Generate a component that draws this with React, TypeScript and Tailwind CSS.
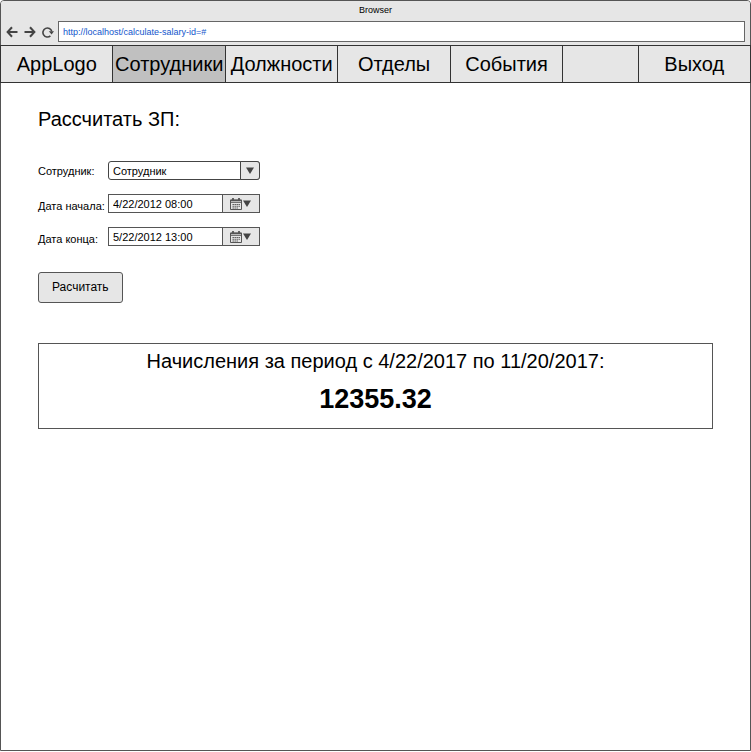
import { useState } from "react";

const menu = [
  { title: "AppLogo", active: false },
  { title: "Сотрудники", active: true },
  { title: "Должности", active: false },
  { title: "Отделы", active: false },
  { title: "События", active: false },
];

function ArrowIcon({ flipped = false }: { flipped?: boolean }) {
  return (
    <svg
      viewBox="0 0 12 12"
      className={flipped ? "size-3 rotate-180" : "size-3"}
      fill="none"
      stroke="#444"
      strokeWidth="2"
      aria-hidden="true"
    >
      <path d="M6 1.2 1.6 6 6 10.8M1.6 6H11.5" />
    </svg>
  );
}

function ReloadIcon() {
  return (
    <svg viewBox="0 0 12 12" className="size-3" fill="none" aria-hidden="true">
      <path d="M8.4 9.9A4.5 4.5 0 1 1 9.8 5.4" stroke="#444" strokeWidth="1.6" />
      <path d="M6.8 5.2H12L9.6 8.6Z" fill="#444" />
    </svg>
  );
}

function CaretIcon() {
  return (
    <svg viewBox="0 0 8 7" className="h-[7px] w-2" aria-hidden="true">
      <path d="M0 0.5H8L4 7Z" fill="#444" />
    </svg>
  );
}

function CalendarIcon() {
  return (
    <svg viewBox="0 0 12 12" className="size-3" fill="none" stroke="#555" aria-hidden="true">
      <path d="M0.5 2H11.5V11.5H0.5Z" />
      <path d="M0.5 2.5H11.5" strokeWidth="1.6" />
      <path d="M3 0V3M9 0V3" strokeWidth="1.8" />
      <path d="M0.5 4.5H11.5" strokeWidth="0.8" />
      <path d="M2.5 6.5H10M2.5 8.3H10M2.5 10H8" strokeWidth="1.1" strokeDasharray="1.4 0.6" />
    </svg>
  );
}

function DateRow({ id, label, initial }: { id: string; label: string; initial: string }) {
  const [value, setValue] = useState(initial);
  return (
    <div className="flex h-[19px] items-start">
      <label htmlFor={id} className="w-[70px] shrink-0 pt-1 whitespace-nowrap">
        {label}
      </label>
      <div className="flex h-[19px] w-[152px] border border-[#555]">
        <input
          id={id}
          value={value}
          onChange={(e) => setValue(e.target.value)}
          className="min-w-0 flex-1 bg-white px-1 outline-none"
        />
        <button
          type="button"
          aria-label="Открыть календарь"
          className="flex w-[37px] items-center justify-center gap-px border-l border-[#555] bg-[#e6e6e6] pr-0.5"
        >
          <CalendarIcon />
          <CaretIcon />
        </button>
      </div>
    </div>
  );
}

export default function App() {
  const [url, setUrl] = useState("http://localhost/calculate-salary-id=#");
  return (
    <div className="flex min-h-[calc(100vh-1px)] flex-col rounded-t-[4px] border border-[#555] bg-white font-['Liberation_Sans',Arial,sans-serif] text-black">
      <header className="rounded-t-[3px] bg-[#e6e6e6] pb-[3px]">
        <div className="flex h-5 items-center justify-center text-[9px]">Browser</div>
        <div className="flex items-center pr-[5px] pl-[5px]">
          <div className="flex w-[52px] shrink-0 items-center gap-[6px]">
            <button type="button" aria-label="Назад">
              <ArrowIcon />
            </button>
            <button type="button" aria-label="Вперёд">
              <ArrowIcon flipped />
            </button>
            <button type="button" aria-label="Обновить">
              <ReloadIcon />
            </button>
          </div>
          <input
            aria-label="Адрес"
            value={url}
            onChange={(e) => setUrl(e.target.value)}
            className="h-[21px] min-w-0 flex-1 border border-[#666] bg-white px-1 text-[9px] text-[#1155cc] outline-none"
          />
        </div>
      </header>

      <nav className="-mx-px flex h-[38px] border-y border-l border-[#333] bg-[#e6e6e6] text-xl">
        {menu.map((item) => (
          <a
            key={item.title}
            href="#"
            className={
              item.active
                ? "flex min-w-0 flex-[3] items-center justify-center border-r border-[#333] bg-[#c0c0c0]"
                : "flex min-w-0 flex-[3] items-center justify-center border-r border-[#333]"
            }
          >
            {item.title}
          </a>
        ))}
        <div className="flex-[2] border-r border-[#333]" />
        <a href="#" className="flex min-w-0 flex-[3] items-center justify-center border-r border-[#333]">
          Выход
        </a>
      </nav>

      <main className="px-[37px] pt-[22px]">
        <h1 className="text-xl">Рассчитать ЗП:</h1>

        <form onSubmit={(e) => e.preventDefault()} className="mt-7 text-[11px] leading-4">
          <div className="flex flex-col gap-[14px]">
            <div className="flex h-[19px] items-start">
              <label htmlFor="employee" className="w-[70px] shrink-0 pt-0.5">
                Сотрудник:
              </label>
              <div className="relative h-[19px] w-[152px]">
                <select
                  id="employee"
                  className="block size-full appearance-none rounded-[3px] border border-[#444] bg-white pr-5 pl-1 outline-none"
                >
                  <option>Сотрудник</option>
                </select>
                <span className="pointer-events-none absolute inset-y-0 right-0 flex w-5 items-center justify-center rounded-r-[3px] border border-[#444] bg-[#e6e6e6]">
                  <CaretIcon />
                </span>
              </div>
            </div>
            <DateRow id="start" label="Дата начала:" initial="4/22/2012 08:00" />
            <DateRow id="end" label="Дата конца:" initial="5/22/2012 13:00" />
          </div>
          <button
            type="submit"
            className="mt-[26px] h-[31px] rounded-[3px] border border-[#555] bg-[#e6e6e6] px-[13px] pb-0.5 text-xs"
          >
            Расчитать
          </button>
        </form>

        <section className="mt-10 border border-[#555] pt-[3px] pb-[9px] text-center">
          <p className="text-xl">Начисления за период с 4/22/2017 по 11/20/2017:</p>
          <p className="mt-1 text-[27px] leading-10 font-bold">12355.32</p>
        </section>
      </main>
    </div>
  );
}
